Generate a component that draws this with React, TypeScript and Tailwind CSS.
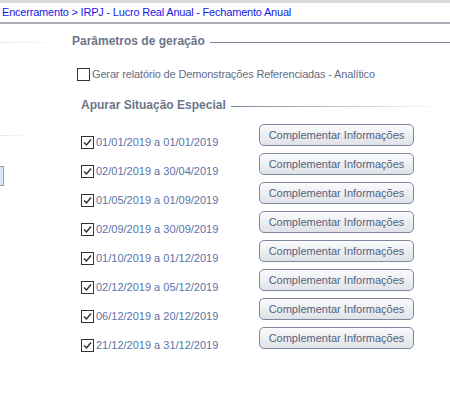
const periods = [
  '01/01/2019 a 01/01/2019',
  '02/01/2019 a 30/04/2019',
  '01/05/2019 a 01/09/2019',
  '02/09/2019 a 30/09/2019',
  '01/10/2019 a 01/12/2019',
  '02/12/2019 a 05/12/2019',
  '06/12/2019 a 20/12/2019',
  '21/12/2019 a 31/12/2019',
];

const CheckBox = ({ checked }: { checked: boolean }) => (
  <span className="flex h-[13px] w-[13px] flex-shrink-0 items-center justify-center border border-[#333333] bg-white">
    {checked && (
      <svg width="11" height="11" viewBox="0 0 11 11">
        <path d="M2 5.5 L4.5 8 L9 2.5" fill="none" stroke="#333333" strokeWidth="1.5" />
      </svg>
    )}
  </span>
);

const SectionTitle = ({ text, fade }: { text: string; fade?: boolean }) => (
  <div className="flex h-[16px] items-center gap-[5px]">
    <span className="text-[12px] font-bold whitespace-nowrap text-[#6b7689]">{text}</span>
    <div
      className={
        fade
          ? 'mt-[2px] h-px flex-1 bg-gradient-to-r from-[#7b879a] to-transparent'
          : 'mt-[2px] h-px flex-1 bg-[#7b879a]'
      }
    />
  </div>
);

const App = () => {
  return (
    <div
      className="h-[394px] w-[450px] overflow-hidden bg-white"
      style={{ fontFamily: '"Liberation Sans", Arial, sans-serif' }}
    >
      <div className="h-[3px] bg-[#d9d9d9]" />
      <div className="flex h-[21px] items-center border-b-2 border-[#a9acb4] bg-white px-[2px] text-[11px] tracking-[-0.2px] whitespace-nowrap text-[#1717e8]">
        Encerramento &gt; IRPJ - Lucro Real Anual - Fechamento Anual
      </div>

      <div className="flex">
        {/* left panel edge */}
        <div className="flex w-[60px] flex-col">
          <div className="mt-[18px] h-px w-[60px] bg-gradient-to-r from-[#e6e6ee] to-transparent" />
          <div className="mt-[92px] h-px w-[34px] bg-gradient-to-r from-[#e6e6ee] to-transparent" />
          <div className="mt-[30px] h-[20px] w-[4px] border-y border-r border-[#8ea2c4] bg-[#dde8f6]" />
        </div>

        <div className="flex flex-1 flex-col">
          <div className="mt-[9px] pl-[12px]">
            <SectionTitle text="Parâmetros de geração" />
          </div>

          <label className="mt-[17px] flex h-[16px] items-center gap-[2px] pl-[17px] text-[11px] tracking-[-0.15px] text-[#5f6d88]">
            <CheckBox checked={false} />
            <span className="whitespace-nowrap">
              Gerar relatório de Demonstrações Referenciadas - Analítico
            </span>
          </label>

          <div className="mt-[15px] pr-[10px] pl-[21px]">
            <SectionTitle text="Apurar Situação Especial" fade />
          </div>

          <div className="mt-[11px] flex flex-col gap-[7px] pl-[21px]">
            {periods.map((period) => (
              <div key={period} className="flex h-[22px] items-start">
                <label className="mt-[10px] flex w-[178px] items-center gap-[2px] text-[11px] text-[#5a74a6]">
                  <CheckBox checked />
                  <span className="whitespace-nowrap">{period}</span>
                </label>
                <button className="h-[22px] w-[155px] rounded-[5px] border border-[#7b889d] bg-gradient-to-b from-[#fbfbfc] to-[#dfe2e8] text-[11px] text-[#56627a]">
                  Complementar Informações
                </button>
              </div>
            ))}
          </div>
        </div>
      </div>
    </div>
  );
};

export default App;
